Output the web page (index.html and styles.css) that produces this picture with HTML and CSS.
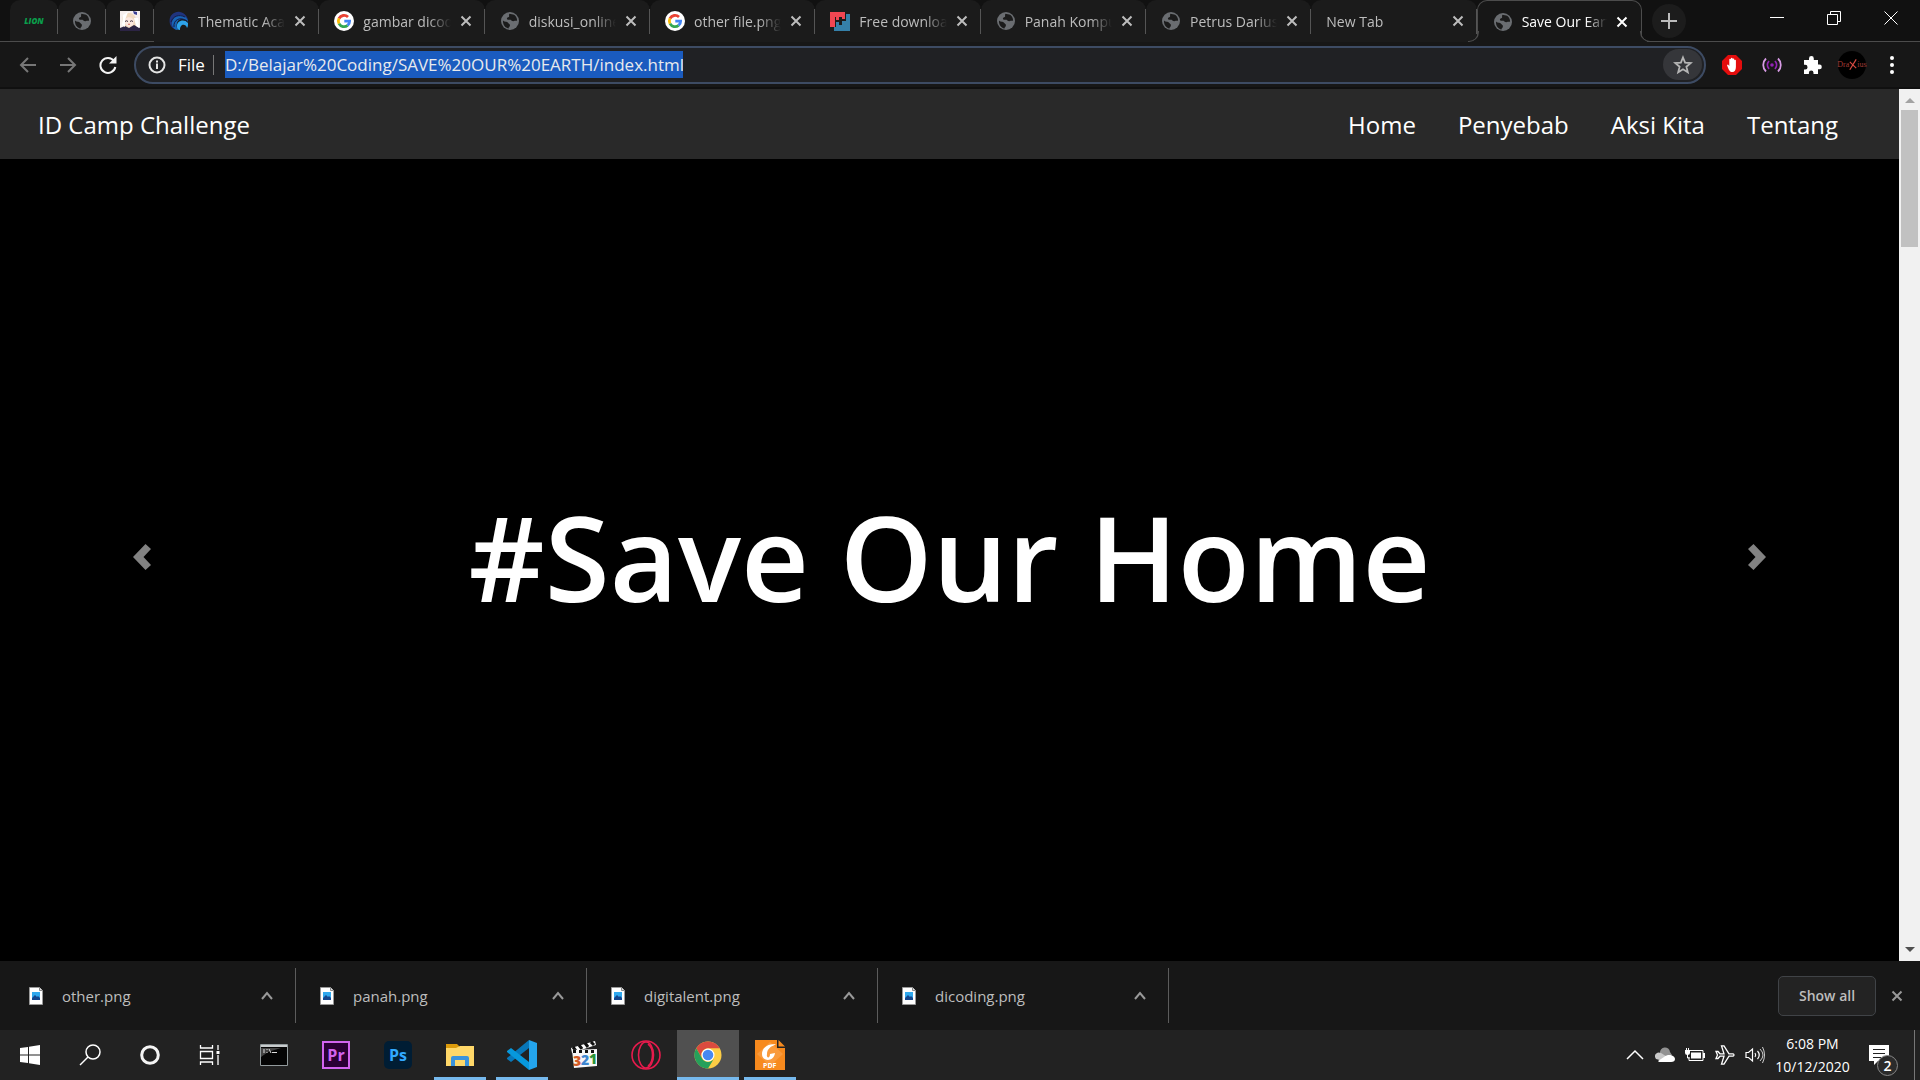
FILE: index.html
```
<!DOCTYPE html>
<html lang="en">
<head>
<meta charset="utf-8">
<meta name="viewport" content="width=device-width, initial-scale=1">
<title>Save Our Earth</title>
<link rel="stylesheet" href="styles.css">
</head>
<body>
<svg class="defs" aria-hidden="true">
  <symbol id="globe" viewBox="0 0 20 20"><circle cx="10" cy="10" r="9" fill="#6a6d71"/><path d="M3 9.500c1.500 1.800 4 .8 5 2.200s2.500 1.300 1.800 3.200c-.4 1-1.300 1.300-1.300 2.600C5 17 2.600 13.500 3 9.500zM9.500 2.800c1 .6 3.700.2 5 1.300 1.400 1.200 2.600 3.200 2.600 5.400-1 .8-1.500-.2-2.400.3-1.200.8-2.700.4-3.600-.6-.8-1-3 .3-4-1-.8-1.200.8-1.700 1.700-2.100.8-.4-.3-2.600.7-3.300z" fill="#1b1b1b"/></symbol>
  <symbol id="google" viewBox="0 0 20 20"><circle cx="10" cy="10" r="10" fill="#fff"/><g fill="none" stroke-width="2.800"><path d="M5 7.500A5.700 5.700 0 0 1 14 6" stroke="#ea4335"/><path d="M5 12.600a5.700 5.700 0 0 1 0-5.200" stroke="#fbbc05"/><path d="M13.600 14.400A5.700 5.700 0 0 1 5 12.600" stroke="#34a853"/><path d="M10.300 10.200h5.300a5.500 5.500 0 0 1-2 4.200" stroke="#4285f4"/></g></symbol>
  <symbol id="cross" viewBox="0 0 12 12"><path d="M1.500 1.500l9 9M10.500 1.500l-9 9" fill="none" stroke="currentColor" stroke-width="2"/></symbol>
  <symbol id="up" viewBox="0 0 12 12"><path d="M1 9l5-6 5 6" fill="none" stroke="currentColor" stroke-width="2"/></symbol>
  <symbol id="image-file" viewBox="0 0 14 18"><path d="M.5.5h10l3 3v14H.500z" fill="#fff" stroke="#999"/><path d="M10.500.5v3h3" fill="#ddd" stroke="#888"/><path d="M3 5h8v8H3z" fill="#2fa8ee"/><path d="M3 11l3-3 2 2 1-1 2 2v2H3z" fill="#14468e"/></symbol>
</svg>

<header class="browser">
  <div class="tabstrip">
    <div class="pinned">
      <button class="pin" aria-label="Lion"><span class="lion">LION</span></button>
      <button class="pin" aria-label="Pinned page"><svg class="favicon"><use href="#globe"/></svg></button>
      <button class="pin" aria-label="Pinned anime page"><svg class="favicon" viewBox="0 0 20 20"><path d="M0 0h20v20H0z" fill="#f6efed"/><path d="M2 9C2 1 14-1 16 8l1 8-4 2-9-1z" fill="#f0d9c0"/><path d="M5 8c3-3 7-2 9 1l-1 5-4 2-4-3z" fill="#fbe7df"/><path d="M0 17l5-2 4 2 5-3 6 3v3H0z" fill="#2c2444"/><path d="M5 10.500q1.500-1.500 3 0M10 10.500q1.500-1.500 3 0" fill="none" stroke="#423243"/><path d="M13 0l4 1v3l-3-1z" fill="#3a3f94"/><path d="M3 4l5-3-3 8v7l-3-2zM14 7l2 8 3 2-1-10z" fill="#fff"/><path d="M8 13q1 1 2 0" fill="none" stroke="#d66c62"/></svg></button>
    </div>
    <nav class="tabs" aria-label="Tabs">
      <div class="tab"><svg class="favicon" viewBox="0 0 20 20"><path d="M1 13C-1 5 5 0 11 1c5 1 8 5 8 9-3-6-11-5-12 1-1 3 0 6 1 8-4-1-6-3-7-6z" fill="#20347e"/><path d="M3 14C2 6 10 2 16 6c2 1 3 3 3 5-4-5-10-3-11 1-1 3 0 5 1 7-3 0-5-2-6-5z" fill="#1764b5"/><path d="M8 16c-1-6 7-9 11-4 0 2 0 4-1 5-1-4-7-5-7 2-2 0-3-1-3-3z" fill="#2da3ea"/><path d="M2 11C4 5 10 3 16 6M5 16c-1-7 6-11 13-6" fill="none" stroke="#151c45"/></svg><button class="tab-title">Thematic Academy</button><button class="close" aria-label="Close tab"><svg class="x"><use href="#cross"/></svg></button></div>
      <div class="tab"><svg class="favicon"><use href="#google"/></svg><button class="tab-title">gambar dicoding</button><button class="close" aria-label="Close tab"><svg class="x"><use href="#cross"/></svg></button></div>
      <div class="tab"><svg class="favicon"><use href="#globe"/></svg><button class="tab-title">diskusi_online</button><button class="close" aria-label="Close tab"><svg class="x"><use href="#cross"/></svg></button></div>
      <div class="tab"><svg class="favicon"><use href="#google"/></svg><button class="tab-title">other file.png</button><button class="close" aria-label="Close tab"><svg class="x"><use href="#cross"/></svg></button></div>
      <div class="tab"><svg class="favicon" viewBox="0 0 20 20"><path d="M0 1h15v7h-3V6H9v3H6V6H5v10H0z" fill="#f04652"/><path d="M16 3h4v17H4v-4h2v-5h3v3h3v-4h4z" fill="#3580a9"/></svg><button class="tab-title">Free download</button><button class="close" aria-label="Close tab"><svg class="x"><use href="#cross"/></svg></button></div>
      <div class="tab"><svg class="favicon"><use href="#globe"/></svg><button class="tab-title">Panah Komputer</button><button class="close" aria-label="Close tab"><svg class="x"><use href="#cross"/></svg></button></div>
      <div class="tab"><svg class="favicon"><use href="#globe"/></svg><button class="tab-title">Petrus Darius</button><button class="close" aria-label="Close tab"><svg class="x"><use href="#cross"/></svg></button></div>
      <div class="tab"><button class="tab-title">New Tab</button><button class="close" aria-label="Close tab"><svg class="x"><use href="#cross"/></svg></button></div>
      <div class="tab active"><svg class="favicon"><use href="#globe"/></svg><button class="tab-title">Save Our Earth</button><button class="close" aria-label="Close tab"><svg class="x"><use href="#cross"/></svg></button></div>
    </nav>
    <button class="new-tab" aria-label="New tab"><svg width="16" height="16" viewBox="0 0 16 16"><path d="M8 0v16M0 8h16" stroke="#bbb" stroke-width="2"/></svg></button>
    <div class="window-controls">
      <button aria-label="Minimize"><svg viewBox="0 0 14 14"><path d="M0 6.500h14" stroke="#fff"/></svg></button>
      <button aria-label="Restore"><svg viewBox="0 0 14 14"><path d="M.5 3.500h10v10H.5zM3.500 3V.5h10v10H11" fill="none" stroke="#fff"/></svg></button>
      <button aria-label="Close"><svg viewBox="0 0 14 14"><path d="M.5.5l13 13M13.500.5l-13 13" stroke="#fff"/></svg></button>
    </div>
  </div>

  <div class="toolbar">
    <div class="history">
      <button aria-label="Back"><svg viewBox="0 0 18 18"><path d="M17 9H2M9 2L2 9l7 7" fill="none" stroke="#777" stroke-width="2"/></svg></button>
      <button aria-label="Forward"><svg viewBox="0 0 18 18"><path d="M1 9h15M9 2l7 7-7 7" fill="none" stroke="#777" stroke-width="2"/></svg></button>
      <button aria-label="Reload"><svg viewBox="0 0 18 18"><path d="M15 5A7.500 7.500 0 1 0 16.300 11" fill="none" stroke="#f3f3f3" stroke-width="2"/><path d="M17.500 0v7.500H10z" fill="#f3f3f3"/></svg></button>
    </div>
    <div class="omnibox">
      <svg class="info" viewBox="0 0 18 18"><circle cx="9" cy="9" r="7.500" fill="none" stroke="#e4e4e4" stroke-width="2"/><path d="M9 4.500v2M9 7.500V13" stroke="#e4e4e4" stroke-width="2"/></svg>
      <label class="scheme" for="url">File</label>
      <input class="url" id="url" type="text" value="D:/Belajar%20Coding/SAVE%20OUR%20EARTH/index.html">
      <button class="star" aria-label="Bookmark"><svg viewBox="0 0 20 20"><path d="M10 2.500l2.100 5.200 5.600.4-4.300 3.600 1.400 5.500L10 14.200l-4.800 3 1.400-5.500-4.300-3.600 5.600-.4z" fill="none" stroke="#b5b5b5" stroke-width="1.800"/></svg></button>
    </div>
    <div class="extensions">
      <button aria-label="Ad blocker"><svg viewBox="0 0 20 20"><path d="M6 0h8l6 6v8l-6 6H6l-6-6V6z" fill="#e40d0d"/><path d="M5 10l1-.6 1.300 1.600V4.500a.8.800 0 0 1 1.600 0V3.600a.8.800 0 0 1 1.700 0v.8a.8.800 0 0 1 1.700 0V5.500a.8.800 0 0 1 1.600 0V12c0 3-1.300 5-3.600 5-2.500 0-3.300-1.500-5.300-7z" fill="#fff"/></svg></button>
      <button aria-label="Broadcast"><svg viewBox="0 0 20 20"><circle cx="10" cy="10" r="1.800" fill="#9225b5"/><path d="M7 6a6 6 0 0 0 0 8M13 6a6 6 0 0 1 0 8" fill="none" stroke="#9225b5" stroke-width="1.800"/><path d="M4 3.500a9 9 0 0 0 0 13M16 3.500a9 9 0 0 1 0 13" fill="none" stroke="#d79be4" stroke-width="1.800"/></svg></button>
      <button aria-label="Extensions"><svg viewBox="0 0 20 20"><path d="M2 5h5V3.500a2.400 2.400 0 0 1 4.800 0V5h4.200v4.600h1.500a2.300 2.300 0 0 1 0 4.600H16V19h-4.500v-1.300a2.300 2.300 0 0 0-4.600 0V19H2v-4.500h1.200a2.300 2.300 0 0 0 0-4.700H2z" fill="#fff"/></svg></button>
      <button class="avatar" aria-label="Profile"><span>Dra</span><svg viewBox="0 0 10 14"><path d="M1 3l8 8M9 0L1 13" stroke="#d64a42" stroke-width="1.500"/></svg><span>ius</span></button>
      <button aria-label="Menu"><svg viewBox="0 0 20 20"><circle cx="10" cy="3" r="2" fill="#fff"/><circle cx="10" cy="10" r="2" fill="#fff"/><circle cx="10" cy="17" r="2" fill="#fff"/></svg></button>
    </div>
  </div>
</header>

<main class="viewport">
  <div class="page">
    <nav class="navbar">
      <a class="brand" href="#">ID Camp Challenge</a>
      <div class="nav-links">
        <a href="#">Home</a>
        <a href="#">Penyebab</a>
        <a href="#">Aksi Kita</a>
        <a href="#">Tentang</a>
      </div>
    </nav>
    <section class="carousel">
      <button class="arrow" aria-label="Previous"><svg viewBox="0 0 18 26"><path d="M12.500 0L18 5l-7.500 8 7.500 8-5.500 5L0 13z" fill="#828282"/></svg></button>
      <h1>#Save Our Home</h1>
      <button class="arrow" aria-label="Next"><svg viewBox="0 0 18 26"><path d="M5.500 0L0 5l7.500 8L0 21l5.500 5L18 13z" fill="#828282"/></svg></button>
    </section>
  </div>
  <div class="scrollbar" aria-hidden="true">
    <svg viewBox="0 0 21 21"><path d="M6 14l5-5 5 5z" fill="#a3a3a3"/></svg>
    <div class="track"><div class="thumb"></div></div>
    <svg viewBox="0 0 21 21"><path d="M6 7l5 5 5-5z" fill="#505050"/></svg>
  </div>
</main>

<section class="downloads" aria-label="Downloads">
  <div class="download"><svg class="file"><use href="#image-file"/></svg><a href="#">other.png</a><button aria-label="Options"><svg class="x"><use href="#up"/></svg></button></div>
  <div class="download"><svg class="file"><use href="#image-file"/></svg><a href="#">panah.png</a><button aria-label="Options"><svg class="x"><use href="#up"/></svg></button></div>
  <div class="download"><svg class="file"><use href="#image-file"/></svg><a href="#">digitalent.png</a><button aria-label="Options"><svg class="x"><use href="#up"/></svg></button></div>
  <div class="download"><svg class="file"><use href="#image-file"/></svg><a href="#">dicoding.png</a><button aria-label="Options"><svg class="x"><use href="#up"/></svg></button></div>
  <button class="show-all">Show all</button>
  <button class="dismiss" aria-label="Close downloads"><svg class="x"><use href="#cross"/></svg></button>
</section>

<footer class="taskbar">
  <div class="system">
    <button aria-label="Start"><svg width="20" height="20" viewBox="0 0 20 20"><path d="M0 3l8-1v7.500H0zM9 1.800L20 0v9.500H9zM0 10.500h8V18l-8-1zM9 10.500h11V20L9 18.200z" fill="#fff"/></svg></button>
    <button aria-label="Search"><svg width="22" height="22" viewBox="0 0 22 22"><circle cx="14" cy="8" r="7" fill="none" stroke="#fff" stroke-width="1.500"/><path d="M9 13l-8 8" stroke="#fff" stroke-width="1.500"/></svg></button>
    <button aria-label="Cortana"><svg width="20" height="20" viewBox="0 0 20 20"><circle cx="10" cy="10" r="8.300" fill="none" stroke="#f4f4f4" stroke-width="3"/></svg></button>
    <button aria-label="Task view"><svg width="22" height="20" viewBox="0 0 22 20"><path d="M1.500 0v3h12V0M1.500 6.500h12v7h-12zM1.500 20v-3h12v3M19 0v5M19 10v10" fill="none" stroke="#fff" stroke-width="1.300"/><path d="M17.500 6h3v3h-3z" fill="#fff"/></svg></button>
  </div>
  <div class="apps">
    <button class="app" aria-label="Command Prompt"><svg viewBox="0 0 30 30"><path d="M1.500 4.500h27v21h-27z" fill="#050505" stroke="#929a9c"/><path d="M2 5h26v2H2z" fill="#c8cccd"/><path d="M2 8h20L9 12l-7 5z" fill="#444"/><path d="M4 10h2M4 12h2M8 9v1M8 12v1M10 9l2 4M13 12.500h5" stroke="#ddd"/></svg></button>
    <button class="app" aria-label="Premiere"><span class="adobe premiere">Pr</span></button>
    <button class="app" aria-label="Photoshop"><span class="adobe photoshop">Ps</span></button>
    <button class="app open" aria-label="File Explorer"><svg viewBox="0 0 30 30"><path d="M1 4h11l3 3v3H1z" fill="#dc9b0b"/><path d="M1 8h10l4-2h14v20H1z" fill="#ffd869"/><path d="M6 26V18q0-2 2-2h14q2 0 2 2v8h-4v-6H10v6z" fill="#3b94dc"/></svg></button>
    <button class="app open" aria-label="Code editor"><svg viewBox="0 0 30 30"><path d="M22 0v8L4 22l-4-3v-1z" fill="#0877b9"/><path d="M0 11l4-3 18 14v8L0 12z" fill="#0798dc"/><path d="M22 0l8 3v24l-8 3z" fill="#24a5ed"/></svg></button>
    <button class="app" aria-label="Media Player"><svg viewBox="0 0 30 30"><path d="M2 8l24-7 1 4L3 13z" fill="#fff"/><path d="M4 7l3 4M10 5l3 4M16 3l3 4M22 2l3 3" stroke="#111" stroke-width="3"/><path d="M3 10l25-1v17L5 28z" fill="#f7f7f7"/><path d="M4 11.500h23" stroke="#111" stroke-width="3" stroke-dasharray="3 3"/><g font-family="Open Sans, sans-serif" font-size="14" font-weight="800"><text x="4" y="26" fill="#d35c25">3</text><text x="12" y="25" fill="#3d86d0">2</text><text x="20" y="24" fill="#299237">1</text></g></svg></button>
    <button class="app" aria-label="Opera"><svg viewBox="0 0 30 30"><g fill="none" stroke="#e71b4d" stroke-width="1.600"><circle cx="15" cy="15" r="14"/><ellipse cx="15" cy="15" rx="7.500" ry="13"/><path d="M17 4c6 4 6 18 0 22"/></g></svg></button>
    <button class="app open current" aria-label="Chrome"><svg viewBox="0 0 30 30"><circle cx="15" cy="15" r="13.500" fill="#fccd45"/><path d="M3.300 8.200A13.500 13.500 0 0 1 26.700 8.200H15A7 7 0 0 0 9 18.500z" fill="#db4b3f"/><path d="M3.300 8.200A13.500 13.500 0 0 0 15 28.500l6-10A7 7 0 0 1 9 18.500z" fill="#26a05b"/><circle cx="15" cy="15" r="6.500" fill="#fff"/><circle cx="15" cy="15" r="5.300" fill="#4688f1"/></svg></button>
    <button class="app open" aria-label="PDF reader"><svg viewBox="0 0 30 30"><path d="M0 0h22v8h8v22H0z" fill="#f78a1e"/><path d="M23.500 0L30 6.500h-6.500z" fill="#f78a1e"/><path d="M15 2l13 12-13 12L2 14z" fill="#f99a3c"/><path d="M21 4.500C13 3 7 8 7 14c0 8 12 8 13-1l-5 1c0 5-4 4-3 0 0-5 4-8 9-9.500z" fill="#fff"/><text x="8" y="28" font-family="Open Sans, sans-serif" font-size="7" font-weight="700" fill="#fff">PDF</text></svg></button>
  </div>
  <div class="tray">
    <button aria-label="Hidden icons"><svg viewBox="0 0 20 20"><path d="M2 14l8-8 8 8" fill="none" stroke="#fff" stroke-width="1.500"/></svg></button>
    <button aria-label="Cloud"><svg viewBox="0 0 20 20"><path d="M5 8a5 5 0 0 1 10-1l2 3-8 3z" fill="#929292"/><path d="M1 14c-3-4 1-8 5-6l8 5-6 3z" fill="#c8c8c8"/><path d="M3 16l6-4c5-4 11-1 11 2q0 3-4 3H4z" fill="#fff"/></svg></button>
    <button aria-label="Battery"><svg viewBox="0 0 20 20"><path d="M5 5.500h13v10H4V12" fill="none" stroke="#fff"/><path d="M6 7.500h10v6H6zM18 8h2v5h-2zM0 5h5v3q0 2-2.500 2T0 8z" fill="#fff"/><path d="M1.500 3v2M3.500 3v2M2.500 9v4h2" fill="none" stroke="#fff"/></svg></button>
    <button aria-label="Airplane mode"><svg viewBox="0 0 20 20"><path d="M1 6.500h2l2 2.300h4L6.500.8H9l5 8h4q2 1.200 0 2.400h-4l-5 8H6.500l2.500-8H5L3 13.500H1L2.500 10z" fill="none" stroke="#fff" stroke-width="1.300"/></svg></button>
    <button aria-label="Volume"><svg viewBox="0 0 20 20"><path d="M1 7.500h2.500L7.500 4v12l-4-3.500H1z" fill="none" stroke="#fff" stroke-width="1.200"/><path d="M10 8q1.500 2 0 4M12.500 6q3.500 4 0 8" fill="none" stroke="#fff" stroke-width="1.200"/><path d="M15 4q6 6 0 12M17.500 2q4 8 0 16" fill="none" stroke="#ccc"/></svg></button>
  </div>
  <time class="clock" datetime="2020-10-12T18:08"><span>6:08 PM</span><span>10/12/2020</span></time>
  <button class="notifications" aria-label="Notifications"><svg width="20" height="20" viewBox="0 0 20 20"><path d="M0 0h20v16H9l-4 4v-4H0z" fill="#fff"/><path d="M4 4.500h12M4 8.500h12M4 12.500h8" stroke="#222"/></svg><span class="badge">2</span></button>
</footer>
</body>
</html>
```
FILE: styles.css
```
* { box-sizing: border-box; }
body {
  margin: 0;
  min-height: 100vh;
  display: flex;
  flex-direction: column;
  background: #000;
  color: #fff;
  font-family: "Open Sans", "Noto Sans", sans-serif;
}
button {
  display: flex;
  align-items: center;
  justify-content: center;
  padding: 0;
  border: 0;
  background: none;
  color: inherit;
  font: inherit;
}
a { color: inherit; text-decoration: none; }
svg { display: block; flex: none; }
.defs { position: absolute; width: 0; height: 0; }
.favicon { width: 20px; height: 20px; }
.x { width: 12px; height: 12px; }

/* Tab strip */
.tabstrip {
  display: flex;
  height: 42px;
  padding-left: 10px;
  background: #111;
  border-bottom: 1px solid #4c4c4c;
  color: #bdbdbd;
  font-size: 14px;
}
.pinned { display: flex; flex: none; }
.pin {
  width: 48px;
  background: #1b1b1b;
  border-radius: 10px 10px 0 0;
}
.pin, .tab { position: relative; }
.pin::after, .tab::after {
  content: "";
  position: absolute;
  right: 0;
  top: 9px;
  width: 1px;
  height: 25px;
  background: #555;
}
.lion {
  color: #0aa04c;
  font-size: 8px;
  font-weight: 800;
  font-style: italic;
}
.tabs {
  display: grid;
  grid-template-columns: repeat(9, minmax(0, 1fr));
  flex: 1;
  min-width: 0;
}
.tab {
  display: flex;
  align-items: center;
  padding: 0 13px 0 15px;
  background: #1b1b1b;
  border-radius: 10px 10px 0 0;
}
.tab-title {
  flex: 1;
  min-width: 0;
  overflow: hidden;
  justify-content: flex-start;
  white-space: nowrap;
  mask-image: linear-gradient(to right, #000 75%, transparent);
}
.favicon + .tab-title { margin: 0 9px; }
.tab.active {
  height: 42px;
  background: #171717;
  border: 1px solid #4c4c4c;
  border-bottom: 0;
  color: #fff;
}
.tab.active::before, .tab.active::after {
  content: "";
  position: absolute;
  top: auto;
  bottom: 0;
  width: 10px;
  height: 10px;
  background: none;
  border-bottom: 1px solid #4c4c4c;
}
.tab.active::before {
  left: -10px;
  border-right: 1px solid #4c4c4c;
  border-bottom-right-radius: 10px;
  box-shadow: 4px 4px 0 #171717;
  clip-path: inset(0 -1px 0 0);
}
.tab.active::after {
  right: -10px;
  border-left: 1px solid #4c4c4c;
  border-bottom-left-radius: 10px;
  box-shadow: -4px 4px 0 #171717;
  clip-path: inset(0 0 0 -1px);
}
.new-tab {
  width: 34px;
  height: 34px;
  margin: 4px 62px 0 10px;
  border-radius: 50%;
  background: #1c1c1c;
}
.window-controls { display: flex; width: 172px; }
.window-controls button { flex: 1; height: 36px; }
.window-controls svg { width: 14px; height: 14px; }

/* Toolbar */
.toolbar {
  display: flex;
  align-items: center;
  height: 47px;
  padding: 0 8px;
  background: #171717;
  border-bottom: 2px solid #101010;
}
.history { display: flex; width: 126px; }
.history button { width: 40px; }
.history svg { width: 18px; height: 18px; }
.omnibox {
  display: flex;
  flex: 1;
  align-items: center;
  height: 38px;
  padding: 0 2px 0 12px;
  border: 2px solid #3d4b63;
  border-radius: 19px;
  background: #202124;
  font-size: 17px;
}
.info { width: 18px; height: 18px; }
.scheme {
  margin-left: 12px;
  padding-right: 8px;
  line-height: 20px;
  border-right: 1px solid #777;
}
.url {
  width: 458px;
  height: 27px;
  margin: 0 auto 0 11px;
  padding: 0;
  border: 0;
  background: #1a5bbf;
  color: #e8eaed;
  font: inherit;
}
.star {
  width: 39px;
  height: 31px;
  border-radius: 16px;
  background: #35363a;
}
.star svg { width: 20px; height: 20px; }
.extensions { display: flex; align-items: center; width: 206px; padding-left: 6px; }
.extensions button { width: 40px; height: 28px; }
.extensions svg { width: 20px; height: 20px; }
.extensions .avatar {
  width: 28px;
  margin: 0 6px;
  border-radius: 50%;
  background: #000;
  color: #a33b36;
  font-family: "Liberation Serif", serif;
  font-size: 8px;
}
.extensions .avatar svg { width: 8px; height: 14px; }

/* Web page */
.viewport { display: flex; flex: 1; }
.page { display: flex; flex: 1; flex-direction: column; }
.navbar {
  display: flex;
  align-items: center;
  justify-content: space-between;
  height: 70px;
  padding: 0 61px 0 38px;
  background: #292929;
  font-size: 24px;
}
.nav-links { display: flex; gap: 42px; }
.carousel { display: flex; flex: 1; align-items: center; padding-bottom: 6px; }
.carousel h1 {
  flex: 1;
  margin: 0;
  text-align: center;
  white-space: nowrap;
  font-size: 118px;
  font-weight: 600;
  line-height: 144px;
}
.arrow { width: 15%; }
.arrow svg { width: 18px; height: 26px; }
.scrollbar {
  display: flex;
  flex-direction: column;
  width: 21px;
  background: #f1f1f1;
}
.scrollbar svg { width: 21px; height: 21px; }
.track { flex: 1; padding: 0 2px; }
.thumb { height: 137px; background: #c1c1c1; }

/* Downloads */
.downloads {
  display: flex;
  align-items: center;
  height: 69px;
  padding: 0 17px 0 5px;
  background: #171717;
  color: #bdbdbd;
  font-size: 15px;
}
.download {
  display: flex;
  align-items: center;
  width: 291px;
  height: 55px;
  padding: 0 22px 0 24px;
  border-right: 1px solid #5c5c5c;
}
.file { width: 14px; height: 18px; }
.download a { flex: 1; margin-left: 19px; }
.download button, .dismiss { color: #999; }
.show-all {
  width: 98px;
  height: 40px;
  margin-left: auto;
  border: 1px solid #404347;
  border-radius: 5px;
  background: #232323;
  font-size: 14px;
  font-weight: 600;
}
.dismiss { margin-left: 15px; }

/* Taskbar */
.taskbar {
  display: flex;
  height: 50px;
  background: #222;
}
.system { display: flex; margin-right: 3px; }
.system button { width: 60px; }
.apps { display: flex; flex: 1; }
.app { position: relative; width: 62px; }
.app svg { width: 30px; height: 30px; }
.app.open::after {
  content: "";
  position: absolute;
  right: 5px;
  bottom: 0;
  left: 5px;
  height: 3px;
  background: #76b9ed;
}
.app.current { background: #505050; }
.app.current::after { right: 0; left: 0; }
.adobe {
  width: 28px;
  height: 28px;
  font-size: 16px;
  font-weight: 700;
  line-height: 24px;
}
.premiere { border: 2px solid #d264ef; background: #2a0034; color: #d264ef; }
.photoshop { border-radius: 5px; background: #001d34; color: #31a8ff; line-height: 28px; }
.tray { display: flex; gap: 10px; margin-right: 10px; }
.tray svg { width: 20px; height: 20px; }
.clock {
  display: flex;
  flex-direction: column;
  width: 75px;
  align-items: center;
  padding-top: 2px;
  font-size: 14px;
  line-height: 23px;
}
.notifications {
  position: relative;
  width: 65px;
  border-right: 1px solid #777;
  margin-right: 5px;
  padding-right: 7px;
}
.badge {
  position: absolute;
  left: 27px;
  bottom: 4px;
  width: 21px;
  height: 21px;
  border: 1px solid #888;
  border-radius: 50%;
  background: #2b2b2b;
  font-size: 14px;
  font-weight: 600;
  line-height: 19px;
}
```
